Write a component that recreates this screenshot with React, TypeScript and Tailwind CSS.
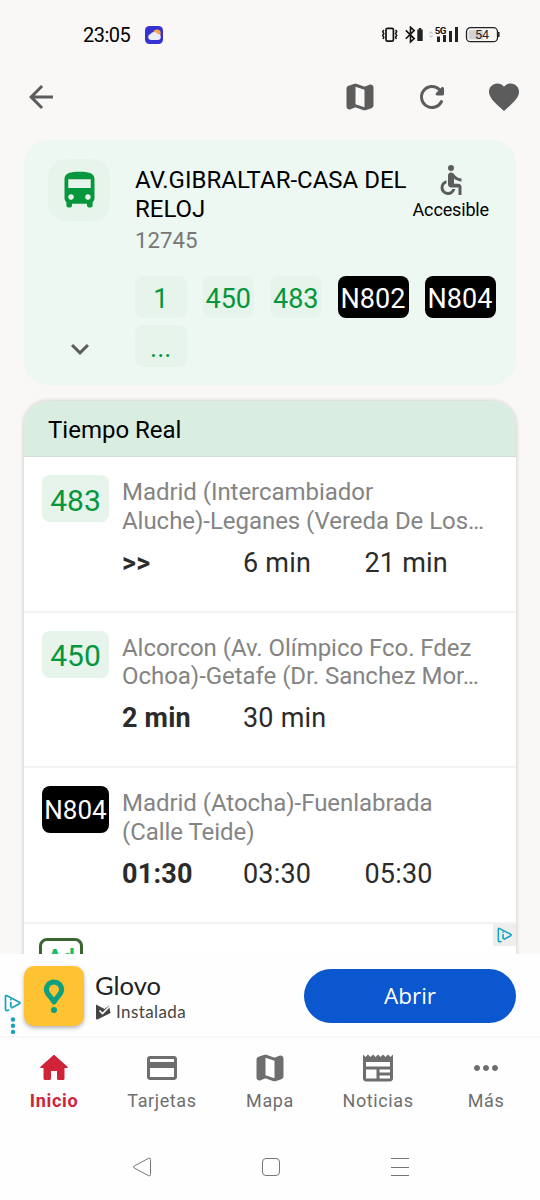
import React from "react";
import {
  MdAccessible,
  MdArrowBack,
  MdCreditCard,
  MdExpandMore,
  MdFavorite,
  MdMoreHoriz,
  MdNewspaper,
} from "react-icons/md";

const lines = [
  { name: "1", night: false },
  { name: "450", night: false },
  { name: "483", night: false },
  { name: "N802", night: true },
  { name: "N804", night: true },
  { name: "...", night: false },
];

const arrivals = [
  {
    line: "483",
    night: false,
    route: ["Madrid (Intercambiador", "Aluche)-Leganes (Vereda De Los…"],
    times: [">>", "6 min", "21 min"],
  },
  {
    line: "450",
    night: false,
    route: ["Alcorcon (Av. Olímpico Fco. Fdez", "Ochoa)-Getafe (Dr. Sanchez Mor…"],
    times: ["2 min", "30 min"],
  },
  {
    line: "N804",
    night: true,
    route: ["Madrid (Atocha)-Fuenlabrada", "(Calle Teide)"],
    times: ["01:30", "03:30", "05:30"],
  },
];

function BusIcon() {
  return (
    <svg viewBox="0 0 24 24" fill="currentColor" className="size-[45px]">
      <path d="M4 16c0 .88.39 1.67 1 2.22V20c0 .55.45 1 1 1h1c.55 0 1-.45 1-1v-1h8v1c0 .55.45 1 1 1h1c.55 0 1-.45 1-1v-1.78c.61-.55 1-1.34 1-2.22V6c0-3.5-3.58-4-8-4s-8 .5-8 4v10zm3.5 1c-.83 0-1.5-.67-1.5-1.5S6.670 14 7.500 14s1.500.67 1.500 1.500S8.330 17 7.500 17zm9 0c-.83 0-1.500-.67-1.500-1.500s.67-1.500 1.500-1.500 1.500.67 1.500 1.500-.67 1.500-1.500 1.500zm1.500-6.300H6V6h12v4.700z" />
    </svg>
  );
}

function MapIcon() {
  return (
    <svg viewBox="0 0 24 24" fill="currentColor" className="size-9">
      <path d="M14.65 4.98l-5-1.75c-.42-.15-.88-.15-1.3-.01L4.36 4.56C3.55 4.84 3 5.6 3 6.46v11.85c0 1.41 1.41 2.37 2.72 1.86l2.93-1.14c.22-.09.47-.09.69-.01l5 1.75c.42.15.88.15 1.3.01l3.99-1.34c.81-.27 1.36-1.04 1.36-1.9V5.69c0-1.41-1.41-2.37-2.72-1.86l-2.93 1.14c-.22.08-.46.09-.69.01zM15 18.89l-6-2.11V5.11l6 2.11v11.67z" />
    </svg>
  );
}

function RefreshIcon() {
  return (
    <svg viewBox="0 0 24 24" fill="currentColor" className="size-9">
      <path d="M17.65 6.35c-1.63-1.63-3.94-2.57-6.48-2.31-3.67.37-6.69 3.35-7.1 7.02C3.52 15.91 7.27 20 12 20c3.19 0 5.93-1.87 7.21-4.56.32-.67-.16-1.44-.9-1.44-.37 0-.72.2-.88.53-1.13 2.43-3.84 3.97-6.8 3.31-2.22-.49-4.01-2.3-4.48-4.52C5.31 9.44 8.26 6 12 6c1.66 0 3.14.69 4.22 1.78l-1.51 1.51c-.63.63-.19 1.71.7 1.71H19c.55 0 1-.45 1-1V6.41c0-.89-1.08-1.34-1.71-.71l-.64.65z" />
    </svg>
  );
}

function HomeIcon() {
  return (
    <svg viewBox="0 0 24 24" fill="currentColor" className="size-9">
      <path d="M10 19v-5h4v5c0 .55.45 1 1 1h3c.55 0 1-.45 1-1v-7h1.7c.46 0 .68-.57.33-.87L12.67 3.6c-.38-.34-.96-.34-1.34 0l-8.36 7.53c-.34.3-.13.87.33.87H5v7c0 .55.45 1 1 1h3c.55 0 1-.45 1-1z" />
    </svg>
  );
}

function AdChoicesIcon({ className }: { className?: string }) {
  return (
    <svg viewBox="0 0 18 18" fill="none" stroke="#16a3c0" className={className}>
      <path d="M4.5 16.2 2.8 16.6Q1.5 16.6 1.5 15.2V2.6Q1.5 1 3 1.8L15.4 8.2Q16.6 9 15.4 9.8L8 13.8" strokeWidth="1.7" strokeLinejoin="round" strokeLinecap="round" />
      <path d="M6.8 5v1.6M6.8 8v5.5" strokeWidth="1.8" />
    </svg>
  );
}

function StatusBar() {
  return (
    <div className="flex h-[61px] shrink-0 items-center justify-between pt-2 pr-[40px] pl-[83px]">
      <div className="flex items-center gap-[14px]">
        <span className="w-12 text-[20px] leading-6 tracking-[-0.5px] text-black">23:05</span>
        <svg viewBox="0 0 18 18" className="size-[18px]">
          <rect width="18" height="18" rx="4.5" fill="#3632d2" />
          <circle cx="12" cy="7.3" r="3.7" fill="#ffa552" />
          <path d="M5.8 14a3 3 0 0 1-.3-5.9A4 4 0 0 1 12.6 8a3 3 0 0 1 .3 6z" fill="#ececfa" />
        </svg>
      </div>

      <svg viewBox="0 0 118 18" className="h-[18px] w-[118px]" fill="none">
        {/* Vibrate */}
        <rect x="4" y="2.3" width="7.4" height="12.8" rx="1.4" stroke="#111" strokeWidth="1.7" />
        <path d="M1.8 4 .7 5.8 1.8 7.6.7 9.4l1.1 1.8-.8 1.8M13.6 4l1.1 1.8-1.1 1.8 1.1 1.8-1.1 1.8.8 1.8" stroke="#111" strokeWidth="1.5" />
        {/* Bluetooth */}
        <path d="M23.8 4.4l8.4 8.2-3.7 3.4V1.2l3.7 3.4-8.4 8.2" stroke="#111" strokeWidth="1.6" />
        <path d="M35.3 3.5h1.5V2h2.4v1.5h1.5V15h-5.4z" fill="#222" />
        {/* Signal */}
        <path d="M46.5 7.5 49 5l2.5 2.5zM46.5 9.5 49 12l2.5-2.5z" fill="#ccc" />
        <text x="52.8" y="8.2" fill="#111" fontFamily="Roboto, sans-serif" fontSize="9.8" fontWeight="700" letterSpacing="-.6">5G</text>
        <path d="M55 10.5h3V16h-3zM61 9h3v7h-3zM67 5h3v11h-3zM73 1h3v15h-3z" fill="#222" />
        {/* Battery */}
        <rect x="84.5" y="1.7" width="31" height="14" rx="4" stroke="#222" strokeWidth="1.3" />
        <path d="M89 4h12v9.5H89q-2.5 0-2.5-2.5V6.5Q86.5 4 89 4z" fill="#d2d2d2" />
        <path d="M116.8 6v5" stroke="#222" strokeWidth="1.5" />
        <text x="100" y="13.2" fill="#222" fontFamily="Roboto, sans-serif" fontSize="12.5" textAnchor="middle">54</text>
      </svg>
    </div>
  );
}

function StopCard() {
  return (
    <section className="flex h-[245px] shrink-0 rounded-[24px] bg-[#eef8f2] pt-[19px] pr-3 pl-6">
      <div className="flex w-[62px] shrink-0 flex-col items-center">
        <div className="flex size-[62px] items-center justify-center rounded-[18px] bg-[#e6f4eb] pl-px text-[#06963b]">
          <BusIcon />
        </div>
        <MdExpandMore className="mt-[110px] ml-px size-9 text-[#5c5c5c]" />
      </div>

      <div className="ml-[25px] flex-1">
        <div className="flex h-[94px] justify-between">
          <div className="pt-[7px] whitespace-nowrap">
            <h1 className="text-2xl leading-[28.5px] text-black">
              AV.GIBRALTAR-CASA DEL
              <br />
              RELOJ
            </h1>
            <p className="mt-[3px] text-[22.3px] leading-[28px] text-[#777]">12745</p>
          </div>
          <div className="mr-[15px] flex flex-col items-center pt-[3px]">
            <MdAccessible className="size-9 text-[#5c5c5c]" />
            <span className="mt-[2px] text-[18px] leading-5 tracking-[-0.15px] text-black">Accesible</span>
          </div>
        </div>

        <div className="mt-[23px] flex flex-wrap gap-x-4 gap-y-[7px]">
          {lines.map((l) => (
            <span
              key={l.name}
              className={
                l.night
                  ? "flex h-[42px] w-[71px] items-center justify-center rounded-lg bg-black pt-[5px] text-[27px] leading-none text-white"
                  : "flex h-[42px] w-[51.5px] items-center justify-center rounded-lg bg-[#e6f4eb] pt-[5px] text-[27px] leading-none text-[#06963b]"
              }
            >
              {l.name}
            </span>
          ))}
        </div>
      </div>
    </section>
  );
}

function BottomAd() {
  return (
    <div className="flex h-[82px] shrink-0 items-center bg-[#fefefe]">
      <div className="flex w-6 flex-col items-center gap-[5px] pt-[38px] pl-px">
        <AdChoicesIcon className="size-[18px]" />
        <svg viewBox="0 0 6 18" className="h-[18px] w-[6px]" fill="#16a3c0">
          <circle cx="3" cy="2.5" r="2.2" />
          <circle cx="3" cy="8.7" r="2.2" />
          <circle cx="3" cy="14.9" r="2.2" />
        </svg>
      </div>
      <div className="mt-[2px] flex size-[60px] items-center justify-center rounded-[10px] bg-[#ffc233] shadow-[0_2px_4px_rgba(0,0,0,0.3)]">
        <svg viewBox="0 0 22 34" className="h-[34px] w-[22px]">
          <path d="M11 3a7.6 7.6 0 0 0-7.6 7.8c0 4 4.4 6.9 7.6 12 3.2-5.1 7.6-8 7.6-12A7.6 7.6 0 0 0 11 3z" fill="none" stroke="#0ca07f" strokeWidth="5.2" strokeLinejoin="round" />
          <circle cx="11" cy="31" r="3" fill="#0ca07f" />
        </svg>
      </div>
      <div className="ml-[11px] flex flex-1 flex-col pt-[3px] font-[Lato,sans-serif]">
        <span className="text-[25.5px] leading-[30px] text-[#202124]">Glovo</span>
        <span className="flex items-center gap-[5px] text-[17px] leading-[24px] tracking-[0.4px] text-[#444]">
          <svg viewBox="0 0 16 16" className="size-4">
            <path d="M1 .5 9.5 5 14 1.5 15.5 9 2.5 15.5Q1 16 1 14z" fill="#444" />
            <path d="m4.5 6.5 3 3L14.5 2.5" fill="none" stroke="#fff" strokeWidth="1.6" />
          </svg>
          Instalada
        </span>
      </div>
      <button className="mt-px mr-6 h-[54px] w-[212px] rounded-full bg-[#0b57d0] font-['Open_Sans',sans-serif] text-[22.5px] text-white">
        Abrir
      </button>
    </div>
  );
}

const tabs = [
  { label: "Inicio", icon: <HomeIcon />, active: true },
  { label: "Tarjetas", icon: <MdCreditCard className="size-9" />, active: false },
  { label: "Mapa", icon: <MapIcon />, active: false },
  { label: "Noticias", icon: <MdNewspaper className="size-9" />, active: false },
  { label: "Más", icon: <MdMoreHoriz className="size-9" />, active: false },
];

export default function App() {
  return (
    <div className="flex h-[1200px] w-[540px] flex-col overflow-hidden bg-[#faf8f7] font-[Roboto,sans-serif]">
      <StatusBar />

      {/* Toolbar */}
      <header className="flex h-[72px] shrink-0 items-center justify-between pr-[18px] pl-[23px] text-[#5c5c5c]">
        <MdArrowBack className="size-9" />
        <div className="flex gap-9">
          <MapIcon />
          <RefreshIcon />
          <MdFavorite className="size-9" />
        </div>
      </header>

      <main className="flex min-h-0 flex-1 flex-col gap-[16px] overflow-hidden px-6 pt-[7px]">
        <StopCard />

        {/* Real time */}
        <section className="shrink-0 rounded-t-[24px] bg-white shadow-[0_0_4px_rgba(0,0,0,0.22)]">
          <h2 className="flex h-14 items-center rounded-t-[24px] border-b border-[#d2dfd7] bg-[#d9ede1] pt-[3px] pl-6 text-2xl text-black">
            Tiempo Real
          </h2>
          {arrivals.map((a) => (
            <div key={a.line} className="flex h-[155.5px] border-b-2 border-[#f3f3f3] pt-[18px] pl-[18px]">
              <div
                className={
                  a.night
                    ? "flex h-[47px] w-[67px] items-center justify-center rounded-lg bg-black pt-[2px] text-[26px] text-white"
                    : "flex h-[47px] w-[67px] items-center justify-center rounded-lg bg-[#e6f4eb] pt-[3px] text-[30px] text-[#06963b]"
                }
              >
                {a.line}
              </div>
              <div className="ml-[13px] pt-[3px]">
                <p className="text-2xl leading-[28.5px] tracking-[-0.04px] whitespace-nowrap text-[#848484]">
                  {a.route[0]}
                  <br />
                  {a.route[1]}
                </p>
                <div className="mt-[11.5px] flex text-[27px] leading-8 tracking-[0.2px] text-[#2b2b2b]">
                  {a.times.map((t, i) => (
                    <span key={t} className={i === 0 ? "w-[121px] font-bold" : "w-[121.5px]"}>
                      {t}
                    </span>
                  ))}
                </div>
              </div>
            </div>
          ))}
          <div className="flex h-20 justify-between pl-[15px]">
            <div className="mt-[14px] h-[40px] w-[44px] rounded-lg border-[3px] border-[#3a6430] pt-[5px] text-center text-[22px] leading-[24px] font-bold text-[#16bd67]">
              Ad
            </div>
            <div className="flex h-[22px] w-[23px] items-center justify-center bg-[#eee]">
              <AdChoicesIcon className="size-4" />
            </div>
          </div>
        </section>
      </main>

      <BottomAd />

      <nav className="flex h-[97px] shrink-0 border-t-2 border-[#f8f8f8] bg-[#fefefe] pt-[12px]">
        {tabs.map((t) => (
          <a
            key={t.label}
            className={
              t.active
                ? "flex flex-1 flex-col items-center text-[18px] font-bold tracking-[0.7px] text-[#d0233a]"
                : "flex flex-1 flex-col items-center text-[18px] tracking-[0.6px] text-[#6e6e6e]"
            }
          >
            {t.icon}
            <span className="mt-[3px] leading-6">{t.label}</span>
          </a>
        ))}
      </nav>

      {/* System buttons */}
      <div className="flex h-[67px] shrink-0 items-center justify-center gap-[109px] bg-[#fefefe] pl-[2px]">
        <svg viewBox="0 0 20 20" className="size-5" fill="none" stroke="#777">
          <path d="M2.2 9 16.5 1.3Q18.5.7 18.5 2.3v15.4q0 1.6-2 1L2.2 11q-1.6-1 0-2z" />
        </svg>
        <svg viewBox="0 0 20 20" className="size-5" fill="none" stroke="#777">
          <rect x="1.5" y="1.5" width="17" height="17" rx="3.5" />
        </svg>
        <svg viewBox="0 0 20 20" className="size-5" fill="none" stroke="#777">
          <path d="M1 1.5h18M1 10.5h18M1 18.5h18" />
        </svg>
      </div>
    </div>
  );
}
